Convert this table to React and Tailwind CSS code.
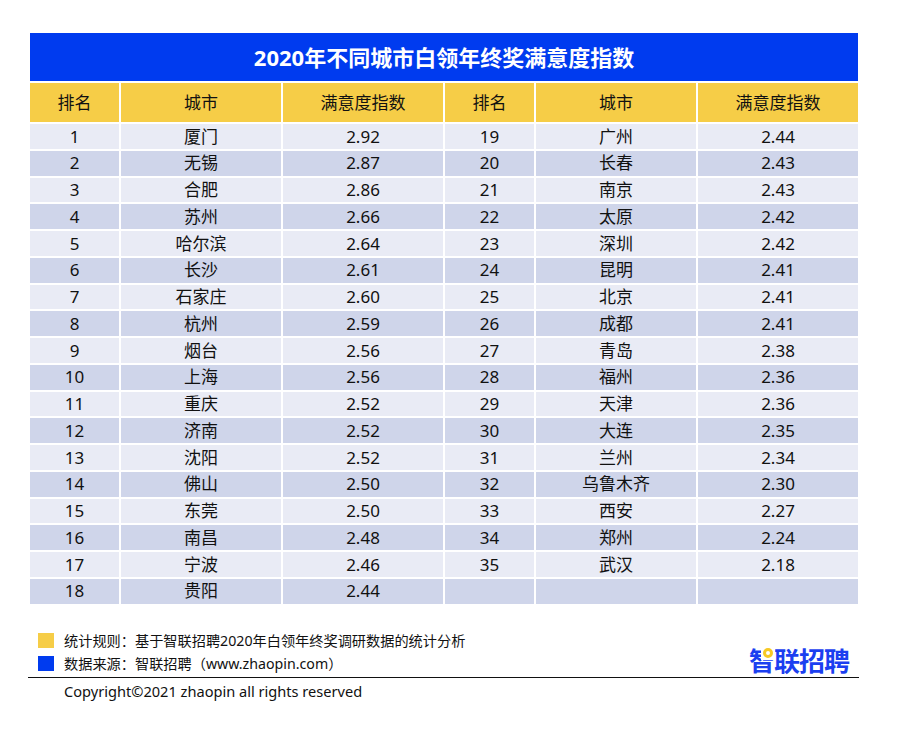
import React from "react";

const left = [
  ["1", "厦门", "2.92"], ["2", "无锡", "2.87"], ["3", "合肥", "2.86"], ["4", "苏州", "2.66"],
  ["5", "哈尔滨", "2.64"], ["6", "长沙", "2.61"], ["7", "石家庄", "2.60"], ["8", "杭州", "2.59"],
  ["9", "烟台", "2.56"], ["10", "上海", "2.56"], ["11", "重庆", "2.52"], ["12", "济南", "2.52"],
  ["13", "沈阳", "2.52"], ["14", "佛山", "2.50"], ["15", "东莞", "2.50"], ["16", "南昌", "2.48"],
  ["17", "宁波", "2.46"], ["18", "贵阳", "2.44"],
];
const right = [
  ["19", "广州", "2.44"], ["20", "长春", "2.43"], ["21", "南京", "2.43"], ["22", "太原", "2.42"],
  ["23", "深圳", "2.42"], ["24", "昆明", "2.41"], ["25", "北京", "2.41"], ["26", "成都", "2.41"],
  ["27", "青岛", "2.38"], ["28", "福州", "2.36"], ["29", "天津", "2.36"], ["30", "大连", "2.35"],
  ["31", "兰州", "2.34"], ["32", "乌鲁木齐", "2.30"], ["33", "西安", "2.27"], ["34", "郑州", "2.24"],
  ["35", "武汉", "2.18"], ["", "", ""],
];

const font = { fontFamily: '"Noto Sans", "Noto Sans CJK SC", sans-serif' };

function HeaderCell({ children }) {
  return (
    <div className="h-[39px] bg-[#F6CD47] flex items-center justify-center text-[17px] text-[#111]">
      {children}
    </div>
  );
}

export default function App() {
  const headers = ["排名", "城市", "满意度指数", "排名", "城市", "满意度指数"];
  return (
    <div className="w-[902px] h-[730px] bg-white pt-[33px] pl-[30px]" style={font}>
      <div className="w-[828px]">
        <div className="h-[48px] bg-[#003BEF] flex items-center justify-center text-white text-[22px] font-bold">
          2020年不同城市白领年终奖满意度指数
        </div>
        <div className="mt-[2px] grid grid-cols-[89px_160px_160px_89px_160px_160px] gap-[2px]">
          {headers.map((h, i) => (
            <HeaderCell key={i}>{h}</HeaderCell>
          ))}
          {left.map((row, r) => {
            const bg = r % 2 === 0 ? "bg-[#E9EBF5]" : "bg-[#CFD5EA]";
            const cells = [...row, ...right[r]];
            return cells.map((c, i) => (
              <div
                key={r + "-" + i}
                className={`h-[24.75px] ${bg} flex items-center justify-center text-[17px] text-[#111]`}
              >
                {c}
              </div>
            ));
          })}
        </div>

        <div className="mt-[29px] flex items-end justify-between">
          <div className="pl-[8px] flex flex-col gap-[8px] pb-[6px]">
            <div className="flex items-center gap-[10px]">
              <div className="w-[16px] h-[15px] bg-[#F6CD47]" />
              <span className="text-[14.2px] leading-[15px] text-[#111]">
                统计规则：基于智联招聘2020年白领年终奖调研数据的统计分析
              </span>
            </div>
            <div className="flex items-center gap-[10px]">
              <div className="w-[16px] h-[15px] bg-[#003BEF]" />
              <span className="text-[14.2px] leading-[15px] text-[#111]">
                数据来源：智联招聘（www.zhaopin.com）
              </span>
            </div>
          </div>
          <div
            className="mr-[9px] pb-[3px] flex text-[26px] leading-[28px] font-bold text-[#1B3FF0] tracking-[-1px]"
            style={{ fontFamily: '"Noto Sans CJK SC", sans-serif' }}
          >
            <span className="relative block">
              智
              <span className="absolute z-10 left-[12px] top-[1px] w-[14px] h-[13px] bg-white flex items-center justify-center">
                <span className="block w-[10px] h-[10px] rounded-full border-[3px] border-solid border-[#F7C924]" />
              </span>
            </span>
            <span className="block">联招聘</span>
          </div>
        </div>
        <div className="-ml-[2px] w-[831px] h-[1px] bg-[#111]" />
        <div className="pl-[34px] pt-[3px] text-[14.6px] text-[#111]">
          Copyright©2021 zhaopin all rights reserved
        </div>
      </div>
    </div>
  );
}
